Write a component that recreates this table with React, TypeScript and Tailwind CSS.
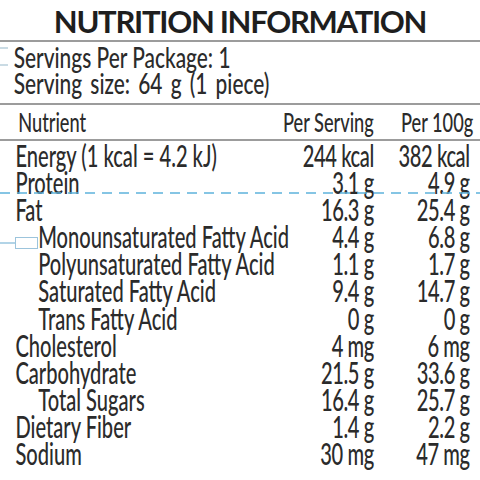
import React from 'react';

type Row = { name: string; serving: string; per100: string; indent?: boolean };

const rows: Row[] = [
  { name: 'Energy (1 kcal = 4.2 kJ)', serving: '244 kcal', per100: '382 kcal' },
  { name: 'Protein', serving: '3.1 g', per100: '4.9 g' },
  { name: 'Fat', serving: '16.3 g', per100: '25.4 g' },
  { name: 'Monounsaturated Fatty Acid', serving: '4.4 g', per100: '6.8 g', indent: true },
  { name: 'Polyunsaturated Fatty Acid', serving: '1.1 g', per100: '1.7 g', indent: true },
  { name: 'Saturated Fatty Acid', serving: '9.4 g', per100: '14.7 g', indent: true },
  { name: 'Trans Fatty Acid', serving: '0 g', per100: '0 g', indent: true },
  { name: 'Cholesterol', serving: '4 mg', per100: '6 mg' },
  { name: 'Carbohydrate', serving: '21.5 g', per100: '33.6 g' },
  { name: 'Total Sugars', serving: '16.4 g', per100: '25.7 g', indent: true },
  { name: 'Dietary Fiber', serving: '1.4 g', per100: '2.2 g' },
  { name: 'Sodium', serving: '30 mg', per100: '47 mg' },
];

export default function App() {
  return (
    <div className="relative w-[480px] h-[480px] overflow-hidden bg-white text-[#2b2b2b] font-['Lato',sans-serif] font-medium">
      {/* title */}
      <div className="h-[42px] pt-[2px] border-b-2 border-[#9c9c9c] text-center text-[31px] leading-[38px] font-bold text-[#1e1e1e] tracking-[-1.3px]">
        NUTRITION INFORMATION
      </div>

      {/* servings - condensed type */}
      <div className="h-[63px] border-b-2 border-[#9c9c9c]">
        <div className="w-[667px] scale-x-[0.72] origin-left pt-[1.5px] pl-[19px] text-[29px] leading-[26px] whitespace-nowrap">
          <div>Servings Per Package: 1</div>
          <div className="[word-spacing:4px]">Serving size: 64 g (1 piece)</div>
        </div>
      </div>

      {/* column heads */}
      <div className="h-[36px] border-b-2 border-[#9c9c9c]">
        <div className="w-[686px] scale-x-[0.7] origin-left pt-[3.5px] pr-[10px] grid grid-cols-[minmax(0,1fr)_160px_142px] text-[26px] leading-[26px] whitespace-nowrap">
          <div className="pl-[26px]">Nutrient</div>
          <div className="text-right">Per Serving</div>
          <div className="text-right">Per 100g</div>
        </div>
      </div>

      {/* rows */}
      <div className="w-[716px] scale-x-[0.67] origin-left pt-[1px] pr-[15px] text-[30px] leading-[27.1px] whitespace-nowrap">
        {rows.map((r) => (
          <div key={r.name} className="grid grid-cols-[minmax(0,1fr)_130px_143px]">
            <div className={r.indent ? 'pl-[57px]' : 'pl-[23px]'}>{r.name}</div>
            <div className="text-right tracking-[-0.6px]">{r.serving}</div>
            <div className="text-right tracking-[-0.6px]">{r.per100}</div>
          </div>
        ))}
      </div>

      {/* editor marks over the label */}
      <svg className="absolute left-0 top-[44px]" width="14" height="26" viewBox="0 0 14 26">
        <path d="M0 4h8M0 21h8" stroke="#b9cfdc" strokeWidth="1.5" fill="none" />
      </svg>
      <svg className="absolute left-0 top-[190px]" width="480" height="6" viewBox="0 0 480 6">
        <line x1="0" y1="3" x2="480" y2="3" stroke="#5eb3dc" strokeWidth="1.6" strokeDasharray="10 7" />
      </svg>
      <svg className="absolute left-0 top-[235px]" width="42" height="16" viewBox="0 0 42 16">
        <path d="M0 8h15" stroke="#7fb8d8" strokeWidth="1.2" fill="none" />
        <rect x="15.5" y="2.5" width="22" height="11" stroke="#9cc4dc" strokeWidth="1" fill="none" />
      </svg>
    </div>
  );
}
